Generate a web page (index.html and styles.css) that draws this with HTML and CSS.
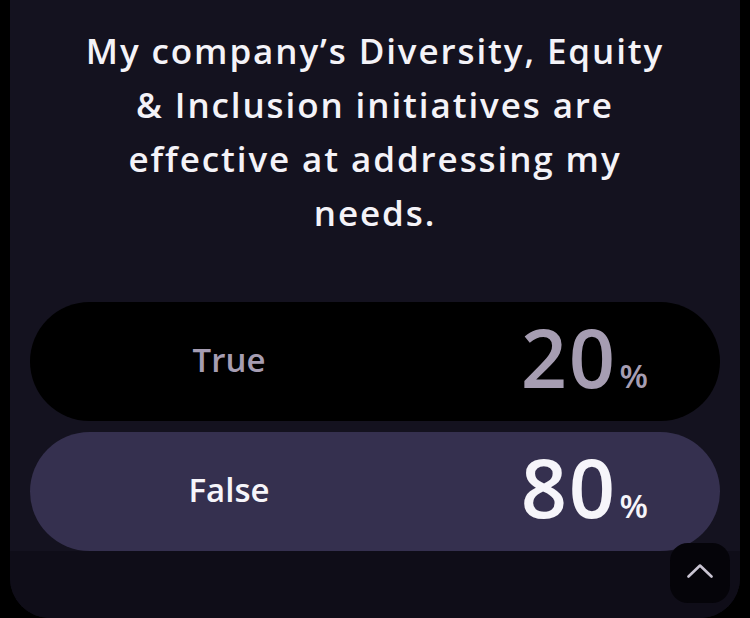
FILE: index.html
```html
<!DOCTYPE html>
<html lang="en">
<head>
<meta charset="utf-8">
<title>Poll result</title>
<link rel="stylesheet" href="styles.css">
</head>
<body>
<main class="card">
  <h1 class="question">My company’s Diversity, Equity &amp; Inclusion initiatives are effective at addressing my needs.</h1>
  <div class="options">
    <div class="option option-dim">
      <span class="label">True</span>
      <span class="value"><span class="num">20</span><span class="pct">%</span></span>
    </div>
    <div class="option option-selected">
      <span class="label">False</span>
      <span class="value"><span class="num">80</span><span class="pct">%</span></span>
    </div>
  </div>
  <div class="footer-fade"></div>
  <button class="to-top" aria-label="Back to top">
    <svg width="26" height="14" viewBox="0 0 26 14" fill="none"><path d="M1.5 12.5 L13 1.5 L24.5 12.5" stroke="#c9c4d2" stroke-width="2.6" stroke-linecap="round" stroke-linejoin="round"/></svg>
  </button>
</main>
</body>
</html>
```

FILE: styles.css
```css
html, body {
  margin: 0;
  padding: 0;
  background: #000;
}
body {
  width: 750px;
  height: 618px;
  overflow: hidden;
  font-family: "Open Sans", "Noto Sans", sans-serif;
}
.card {
  position: relative;
  margin: 0 10px;
  height: 618px;
  background: #14121f;
  border-radius: 0 0 40px 40px;
  padding: 24px 20px 0;
  box-sizing: border-box;
  display: flex;
  flex-direction: column;
  overflow: hidden;
}
.question {
  margin: 0 auto;
  max-width: 590px;
  text-align: center;
  color: #f4f3f8;
  font-size: 35px;
  line-height: 54px;
  font-weight: 600;
  letter-spacing: 1.9px;
}
.options {
  margin-top: 62px;
  display: flex;
  flex-direction: column;
  gap: 11px;
}
.option {
  height: 119px;
  border-radius: 60px;
  display: flex;
  align-items: center;
  padding: 0 72px 4px 40px;
  box-sizing: border-box;
}
.option-dim {
  background: #000;
  color: #a69db2;
}
.option-selected {
  background: #35304f;
  color: #f6f5fa;
}
.label {
  width: 318px;
  text-align: center;
  font-size: 33px;
  font-weight: 600;
}
.value {
  margin-left: auto;
  display: flex;
  align-items: baseline;
  padding-bottom: 5px;
}
.num {
  font-size: 81px;
  font-weight: 600;
  line-height: 1;
  letter-spacing: 1.5px;
}
.pct {
  font-size: 33px;
  font-weight: 600;
  margin-left: 3px;
}
.footer-fade {
  flex: 1;
  margin: 0 -20px;
  background: #0f0d18;
}
.to-top {
  position: absolute;
  left: 660px;
  top: 543px;
  width: 60px;
  height: 60px;
  border: 0;
  border-radius: 18px;
  background: #050409;
  display: flex;
  align-items: center;
  justify-content: center;
  padding: 0 0 4px;
}
```
